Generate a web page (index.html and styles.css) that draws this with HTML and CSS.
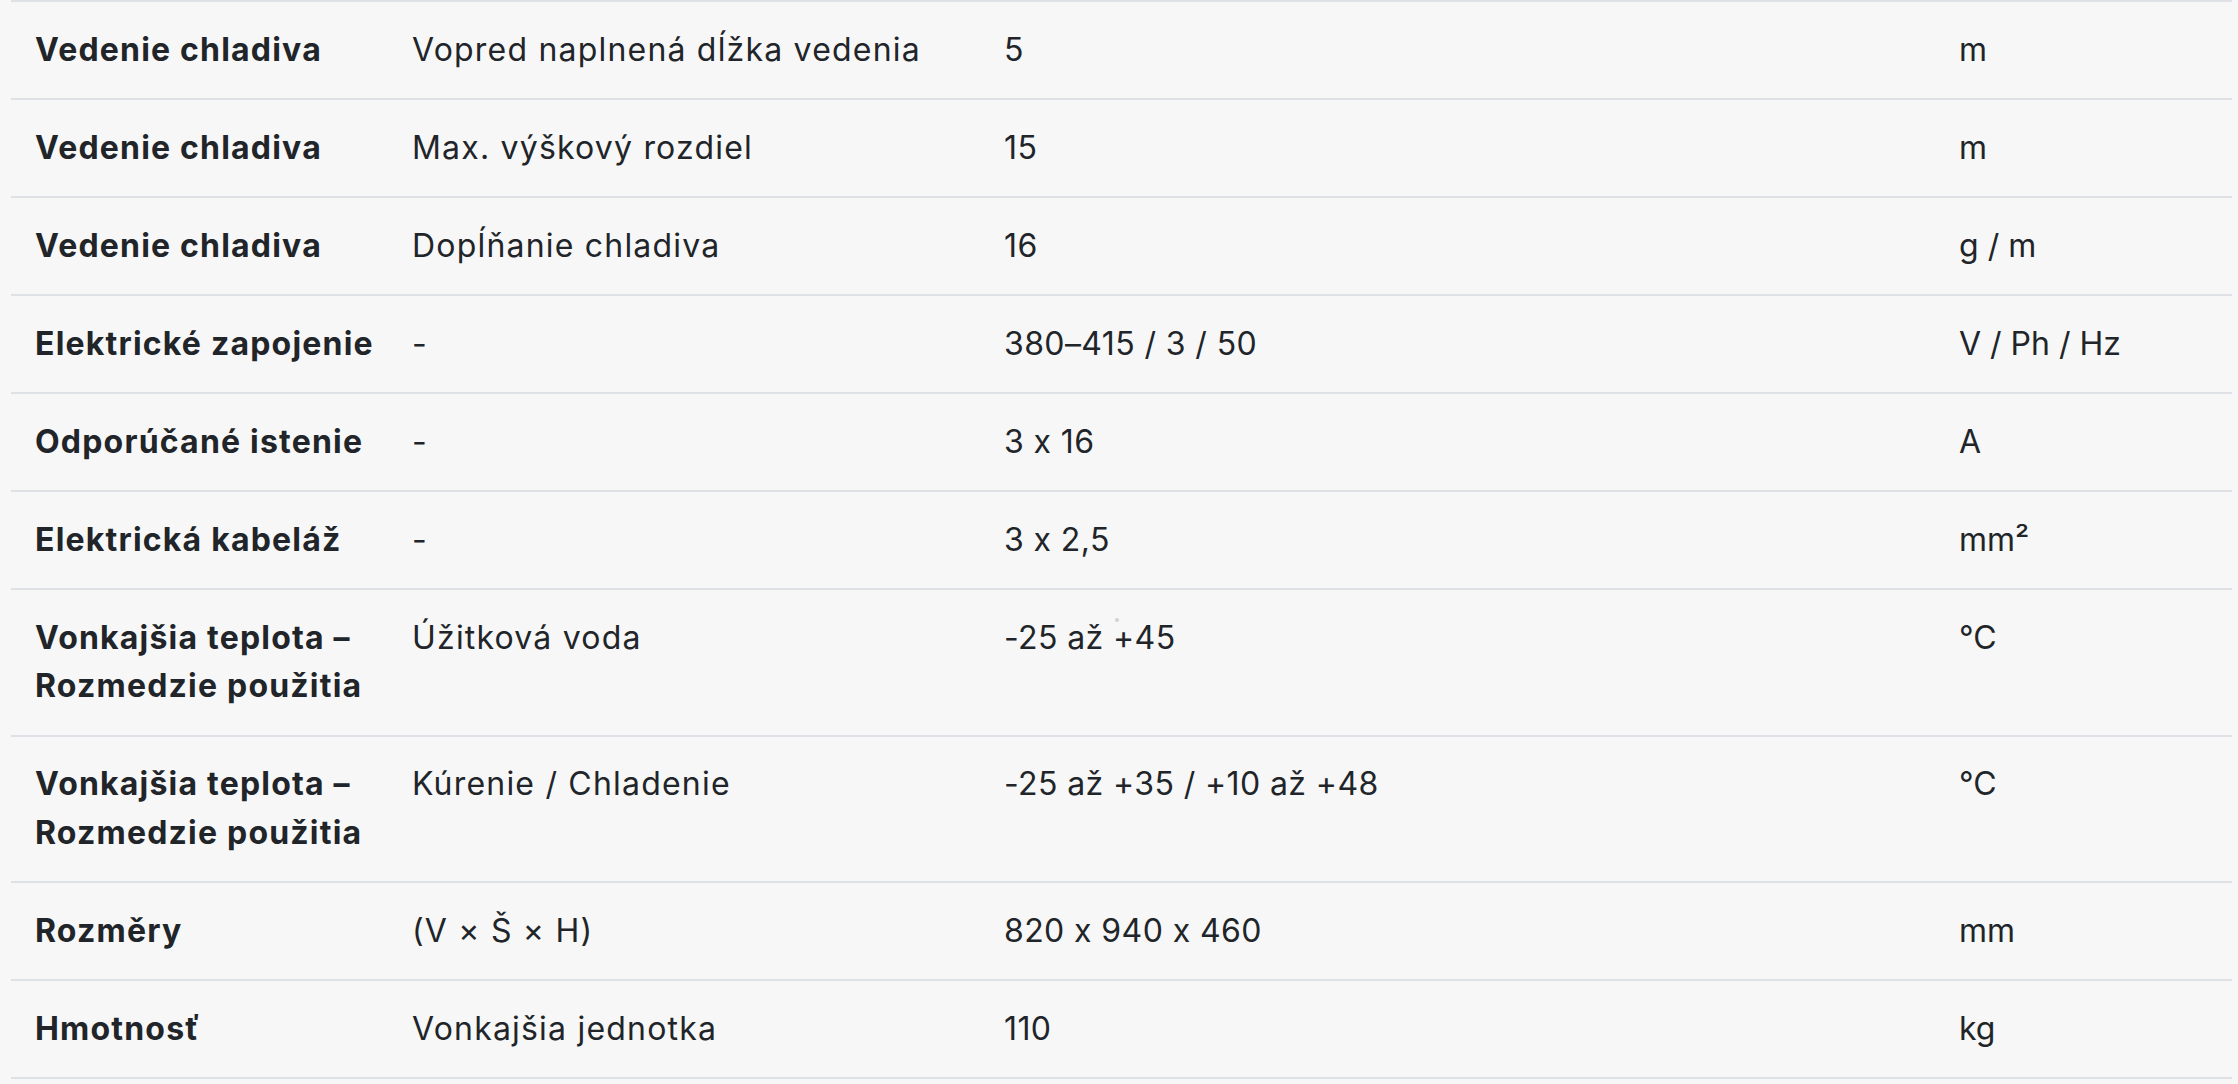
FILE: index.html
```html
<!DOCTYPE html>
<html lang="sk">
<head>
<meta charset="utf-8">
<title>Technické parametre</title>
<link rel="stylesheet" href="styles.css">
</head>
<body>
<div class="wrap">
  <table class="specs">
    <colgroup>
      <col class="c-name">
      <col class="c-desc">
      <col class="c-val">
      <col class="c-unit">
    </colgroup>
    <tbody>
      <tr><th>Vedenie chladiva</th><td>Vopred naplnená dĺžka vedenia</td><td class="val">5</td><td class="unit">m</td></tr>
      <tr><th>Vedenie chladiva</th><td>Max. výškový rozdiel</td><td class="val">15</td><td class="unit">m</td></tr>
      <tr><th>Vedenie chladiva</th><td>Dopĺňanie chladiva</td><td class="val">16</td><td class="unit">g / m</td></tr>
      <tr><th>Elektrické zapojenie</th><td>-</td><td class="val">380–415 / 3 / 50</td><td class="unit">V / Ph / Hz</td></tr>
      <tr><th>Odporúčané istenie</th><td>-</td><td class="val">3 x 16</td><td class="unit">A</td></tr>
      <tr><th>Elektrická kabeláž</th><td>-</td><td class="val">3 x 2,5</td><td class="unit">mm²</td></tr>
      <tr><th>Vonkajšia teplota – Rozmedzie použitia</th><td>Úžitková voda</td><td class="val has-dot">-25 až +45<span class="dot"></span></td><td class="unit">°C</td></tr>
      <tr><th>Vonkajšia teplota – Rozmedzie použitia</th><td>Kúrenie / Chladenie</td><td class="val">-25 až +35 / +10 až +48</td><td class="unit">°C</td></tr>
      <tr><th>Rozměry</th><td>(V × Š × H)</td><td class="val">820 x 940 x 460</td><td class="unit">mm</td></tr>
      <tr><th>Hmotnosť</th><td>Vonkajšia jednotka</td><td class="val">110</td><td class="unit">kg</td></tr>
    </tbody>
  </table>
</div>
</body>
</html>
```
FILE: styles.css
```css
html, body {
  margin: 0;
  padding: 0;
  background: #f7f7f7;
}

.wrap {
  padding: 0 6px 0 11px;
}

.specs {
  width: 100%;
  table-layout: fixed;
  border-collapse: collapse;
  border-top: 2px solid #dee2e6;
  font-family: Inter, "Noto Sans", sans-serif;
  font-size: 32px;
  line-height: 48.5px;
  letter-spacing: 1.2px;
  color: #212529;
}

.c-name { width: 377px; }
.c-desc { width: 592px; }
.c-val { width: 955px; }

.specs tr {
  border-bottom: 2px solid #dee2e6;
}

.specs th,
.specs td {
  padding: 23.75px 8px 23.75px 24px;
  text-align: left;
  vertical-align: top;
}

.specs th {
  font-weight: 700;
}

.specs td {
  font-weight: 400;
}

.specs td.val {
  letter-spacing: 0.4px;
}

.specs td.unit {
  letter-spacing: 0;
}

.has-dot {
  position: relative;
}

.dot {
  position: absolute;
  left: 135px;
  top: 28px;
  width: 4px;
  height: 4px;
  border-radius: 50%;
  background: #d2d2d2;
}
```
